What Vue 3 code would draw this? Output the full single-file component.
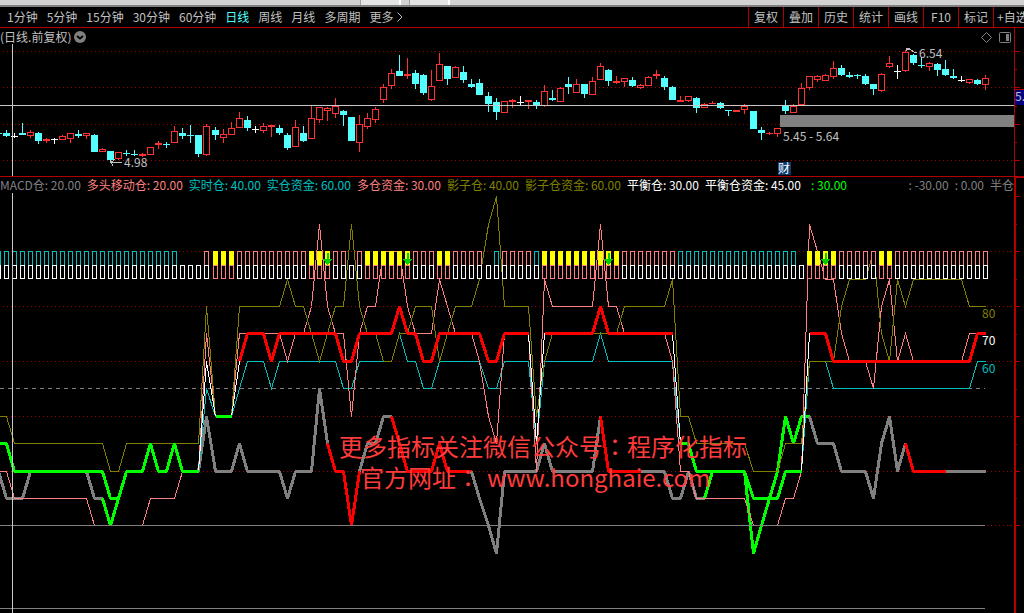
<template>
  <div class="terminal">
    <div class="window-edge">
      <span class="edge-tab" />
      <span class="edge-tab" />
    </div>

    <nav class="toolbar">
      <div class="periods">
        <button
          v-for="p in periods"
          :key="p"
          class="period"
          :class="{ active: p === activePeriod }"
          @click="activePeriod = p"
        >
          {{ p }}
        </button>
        <button class="period more">
          更多
          <svg class="more-icon" viewBox="0 0 6 10">
            <path d="M0.5 0.5 L5 5 L0.5 9.5" />
          </svg>
        </button>
      </div>
      <div class="tools">
        <button v-for="t in tools" :key="t" class="tool">{{ t }}</button>
      </div>
    </nav>

    <section class="panel price-panel">
      <svg class="chart" viewBox="0 28 1014 148">
        <line
          v-for="y in [51.5, 87.5, 124.5, 160.5]"
          :key="y"
          class="grid-line"
          x1="3"
          x2="1014"
          :y1="y"
          :y2="y"
        />
        <g v-for="c in candles" :key="c.i" :class="['candle', c.kind]">
          <path v-if="c.wick" :d="c.wick" />
          <rect
            v-if="c.height > 0"
            :x="c.x - 3"
            :y="c.top + 0.5"
            width="6"
            :height="c.height"
          />
          <path v-else :d="`M${c.x - 3.5} ${c.top + 0.5}h7`" />
        </g>
        <rect class="gap-zone" x="780" y="115" width="234" height="12" />
        <path class="cross" d="M0 105.5H1014M12.5 44V176" />
        <path class="pointer" d="M111 162.5H122M115 159L111 162.5L113 166" />
        <path class="pointer" d="M906 51V48.5H910M907 49L911 50L914 52H917" />
        <text class="mark" x="124" y="167">4.98</text>
        <text class="mark" x="919" y="58">6.54</text>
        <text class="mark" x="783" y="141">5.45 - 5.64</text>
        <rect class="news-box" x="778" y="162" width="13" height="13" />
        <text class="news" x="778" y="173">财</text>
        <path class="corner-icon" d="M986.5 32.5L991.5 37.5L986.5 42.5L981.5 37.5Z" />
        <rect
          class="corner-icon"
          x="999.5"
          y="32.5"
          width="11"
          height="10"
          rx="1"
        />
        <rect class="corner-fill" x="1006" y="34" width="3" height="7" />
      </svg>
      <svg class="axis" viewBox="1014 28 10 148">
        <path class="axis-line" d="M1014.5 28V176" />
        <path
          class="axis-line"
          d="M1015 51.5h5M1015 69.5h2M1015 87.5h5M1015 106.5h2M1015 124.5h5
             M1015 142.5h2M1015 160.5h5M1015 89.5h9"
        />
        <rect class="tag-box" x="1015" y="90" width="9" height="15" />
        <text class="mark" x="1015" y="101">5.</text>
      </svg>
      <button class="chart-title">
        <span>(日线.前复权)</span>
        <svg class="title-icon" viewBox="0 0 12 12">
          <circle cx="6" cy="6" r="6" />
          <path d="M3 5L6 7.5L9 5" />
        </svg>
      </button>
    </section>

    <header class="readout">
      <div class="readout-items">
        <span v-for="r in readings" :key="r[0]" :class="r[1]">{{ r[0] }}</span>
        <span class="lime signal">: 30.00</span>
        <span class="gray tail">: -30.00</span>
        <span class="gray">: 0.00</span>
        <span class="gray">半仓</span>
      </div>
    </header>

    <section class="panel">
      <svg class="chart" viewBox="0 193 1014 420">
        <line
          v-for="y in [251.5, 306.5, 361.5, 416.5, 471.5]"
          :key="y"
          class="grid-line"
          x1="3"
          x2="1014"
          :y1="y"
          :y2="y"
        />
        <path class="grid-line" d="M987 525.5H1014" />
        <path class="middle" d="M0 388.5H985" />
        <polyline
          v-for="s, idx in series"
          :key="idx"
          :class="['line', s.color, { thick: s.thick }]"
          :points="s.points"
        />
        <path class="base" d="M0 525.5H985M0 608.5H985" />
        <g v-for="b in bars" :key="b.x">
          <rect
            v-if="b.upper"
            :class="['bar', b.upper]"
            :x="b.x - 2"
            y="251.5"
            width="4"
            height="14"
          />
          <rect
            :class="['bar', b.lower]"
            :x="b.x - 2"
            y="265.5"
            width="4"
            height="13"
          />
        </g>
        <path
          v-for="i in [40, 50, 75, 102]"
          :key="i"
          class="arrow"
          :d="`M${xAt(i) - 1} 253h2v6h4l-5 6l-5 -6h4z`"
        />
        <path class="cross" d="M12.5 193V613" />
        <text class="value olive" x="982" y="318">80</text>
        <text class="value white" x="982" y="345">70</text>
        <text class="value teal" x="982" y="373">60</text>
        <text class="notice" x="339" y="456">
          更多指标关注微信公众号<tspan class="colon">：</tspan>程序化指标
        </text>
        <text class="notice" x="360" y="487">
          官方网址<tspan class="colon">：</tspan>
        </text>
        <text class="notice" x="487" y="487">www.honghaie.com</text>
      </svg>
      <svg class="axis" viewBox="1014 193 10 420">
        <path class="axis-line heavy" d="M1015 193V613" />
        <path
          class="axis-line"
          d="M1016 196.5h4M1016 251.5h4M1016 306.5h4M1016 361.5h4M1016 416.5h4
             M1016 471.5h4M1016 525.5h4M1016 224.5h1M1016 279.5h1M1016 334.5h1
             M1016 389.5h1M1016 444.5h1M1016 498.5h1"
        />
      </svg>
    </section>
  </div>
</template>

<script setup>
  import { ref } from 'vue';

  const periods = ['1分钟', '5分钟', '15分钟', '30分钟', '60分钟', '日线',
                   '周线', '月线', '多周期'];
  const tools = ['复权', '叠加', '历史', '统计', '画线', 'F10', '标记', '+自选'];
  const activePeriod = ref('日线');

  const readings = [
    ['MACD仓: 20.00', 'gray'],
    ['多头移动仓: 20.00', 'pink'],
    ['实时仓: 40.00', 'teal'],
    ['实仓资金: 60.00', 'teal'],
    ['多仓资金: 30.00', 'pink'],
    ['影子仓: 40.00', 'olive'],
    ['影子仓资金: 60.00', 'olive'],
    ['平衡仓: 30.00', 'white'],
    ['平衡仓资金: 45.00', 'white']
  ];

  // Center of the i-th day, on a pixel center so that 1px strokes stay sharp.
  // Days are 8px apart, the rest of the width is handed out at three places.
  function xAt(i) {
    const extra = [26, 60, 93].filter(start => i >= start).length;
    return 6.5 + i * 8 + extra;
  }

  function yAt(value) {
    return Math.round(525.4 - value * 2.743) + 0.5;
  }

  // kind (u - up, d - down, w - flat), high, body top, body bottom, low.
  // The first entry is the day that is cut off by the left edge.
  const days = `
    d 133 133 134 134|d 130 133 136 137|w 133 136 137 138|d 123 133 135 135
    u 130 132 136 138|d 132 133 141 144|u 138 139 141 143|w 138 139 140 144
    u 135 136 140 140|u 133 133 139 143|d 130 134 136 138|u 133 133 136 139
    d 134 135 152 152|u 148 149 152 152|d 151 151 160 162|u 152 152 159 160
    d 150 153 154 156|d 150 154 155 156|u 153 154 156 157|u 147 147 155 155
    u 141 143 145 149|d 142 144 145 148|u 126 131 143 143|d 128 133 136 139
    d 125 135 136 143|d 135 135 154 157|u 124 126 155 156|d 127 130 135 140
    u 129 134 138 143|u 122 128 135 135|u 112 118 128 128|d 116 120 128 131
    w 126 129 130 133|u 123 126 131 133|u 125 125 127 137|d 125 128 133 135
    d 133 135 148 150|u 120 127 147 147|d 126 133 141 142|u 106 118 139 139
    u 107 107 120 123|u 107 108 111 121|u 98 106 114 118|d 110 111 115 126
    d 117 117 141 141|u 115 124 143 152|u 113 118 127 129|u 107 109 120 123
    u 84 87 100 103|u 69 73 86 89|d 55 71 76 76|u 58 74 76 79
    d 70 73 84 89|d 74 75 93 95|u 70 86 100 101|u 53 64 81 81
    d 66 66 79 85|u 66 67 78 78|d 66 72 80 83|d 79 84 87 88
    d 79 83 95 95|d 92 96 104 112|d 98 102 112 120|u 101 101 113 113
    u 99 100 102 108|w 96 102 103 105|u 100 100 102 109|d 100 102 106 109
    u 85 91 106 107|d 90 98 100 101|u 87 88 102 102|d 77 84 87 94
    u 79 84 93 93|d 84 84 94 98|u 77 81 95 95|u 63 66 80 80
    d 69 70 81 86|u 76 81 83 84|u 78 78 82 87|d 77 80 86 87
    u 84 85 88 89|u 76 77 86 86|u 70 74 76 79|d 76 78 87 90
    d 86 87 100 100|u 96 100 102 102|u 96 96 101 102|d 97 98 108 113
    u 103 104 108 108|u 101 103 104 104|d 102 103 108 109|d 110 110 111 116
    u 110 110 112 112|u 104 106 110 114|d 111 111 129 129|d 127 130 133 140
    u 132 133 134 135|u 128 128 134 137|d 100 106 111 114|u 104 106 113 113
    u 83 88 105 105|u 76 76 88 90|u 75 76 80 82|u 74 75 81 81
    u 61 68 77 79|d 65 68 75 76|d 72 75 77 78|d 74 75 76 79
    d 74 76 84 85|d 84 84 89 95|u 73 74 91 92|u 56 63 67 68
    w 65 71 72 79|u 50 52 71 72|d 54 55 63 65|d 57 65 66 68
    u 62 63 67 71|d 63 64 70 76|d 60 69 75 76|d 69 76 78 79
    w 76 80 81 82|u 79 79 83 84|d 79 80 84 85|u 75 78 85 90
  `;

  const candles = days.trim().split(/[|\n]/).map((row, idx) => {
    const [kind, ...nums] = row.trim().split(' ');
    const [high, top, bottom, low] = nums.map(Number);
    const x = xAt(idx - 1);
    let wick = '';
    if (high < top) wick += `M${x} ${high}V${top}`;
    if (low > bottom) wick += `M${x} ${bottom}V${low}`;
    return { i: idx, kind, x, top, height: bottom - top - 1, wick };
  });

  // Flat list of day/value pairs
  function line(color, thick, pairs) {
    const points = [];
    for (let k = 0; k < pairs.length; k += 2)
      points.push(`${xAt(pairs[k])},${yAt(pairs[k + 1])}`);
    return { color, thick, points: points.join(' ') };
  }

  const series = [
    // MACD position
    line('gray', true, [-1, 20, 0, 10, 2, 10, 3, 20, 10, 20, 11, 10, 12, 10]),
    line('lime', true, [12, 10, 13, 0, 14, 10, 15, 20]),
    line('gray', true, [24, 20, 25, 40, 26, 20, 28, 20, 29, 30, 30, 20, 34, 20,
      35, 10, 36, 20, 38, 20, 39, 50, 40, 30]),
    line('red', true, [40, 30, 41, 20, 42, 20, 43, 0, 44, 20]),
    line('gray', true, [44, 20, 45, 30, 46, 30, 47, 40, 48, 40]),
    line('red', true, [48, 40, 49, 30, 50, 20, 53, 20, 54, 30, 55, 20, 58, 20]),
    line('gray', true, [58, 20, 59, 10, 60, 0, 61, -10, 62, 20, 66, 20, 67, 30,
      68, 20, 73, 20, 74, 40]),
    line('red', true, [74, 40, 75, 20, 79, 20]),
    line('gray', true, [79, 20, 82, 20, 83, 10, 84, 10, 85, 20, 86, 10,
      87, 10]),
    line('lime', true, [87, 10, 88, 20, 92, 20, 93, -10, 94, 0, 95, 10, 96, 20,
      97, 40, 98, 30, 99, 40, 100, 40]),
    line('gray', true, [100, 40, 101, 30, 103, 30, 104, 20, 107, 20, 108, 10,
      109, 30, 110, 40, 111, 20, 112, 30]),
    line('red', true, [112, 30, 113, 20, 117, 20]),
    line('gray', true, [117, 20, 122, 20]),

    // Real position
    line('teal', false, [24, 20, 25, 50, 26, 40, 28, 40, 29, 50, 30, 60, 32, 60,
      33, 50, 34, 60, 41, 60, 42, 50, 43, 50, 44, 60, 48, 60, 49, 70, 50, 60,
      51, 60, 52, 50, 53, 50, 54, 60, 59, 60, 60, 50, 61, 50, 62, 60, 65, 60,
      66, 30, 67, 60, 73, 60, 74, 70, 75, 60, 83, 60, 84, 30]),
    line('teal', false, [99, 20, 100, 60, 102, 60, 103, 50, 120, 50, 121, 60,
      122, 60]),

    // Long position
    line('pink', false, [-1, 20, 0, 20, 1, 10, 10, 10, 11, 0, 17, 0, 18, 10,
      21, 10, 22, 20, 24, 20, 25, 70, 26, 40, 28, 40, 29, 70, 34, 70, 35, 60,
      36, 70, 37, 70, 38, 80, 39, 110, 40, 80, 41, 70, 42, 70, 43, 40, 44, 70,
      45, 80, 46, 80, 47, 100, 49, 100, 50, 80, 51, 70, 53, 70, 54, 90, 55, 80,
      56, 70, 58, 70, 59, 60, 60, 40, 61, 30, 62, 70, 65, 70, 66, 20, 67, 90,
      68, 80, 73, 80, 74, 110, 75, 80, 76, 80, 77, 70, 82, 70, 83, 60, 84, 20,
      85, 20, 86, 10, 92, 10, 93, 0, 96, 0, 97, 10, 98, 10, 99, 20, 100, 110,
      101, 100, 102, 90, 103, 90, 104, 70, 105, 60, 107, 60, 108, 50, 109, 80,
      110, 90, 111, 60, 112, 70, 113, 60, 119, 60, 120, 70, 122, 70]),

    // Shadow position
    line('olive', false, [-1, 40, 0, 40, 1, 30, 12, 30, 13, 20, 14, 20, 15, 30,
      24, 30, 25, 80, 26, 40, 28, 40, 29, 80, 34, 80, 35, 90, 36, 80, 37, 80,
      38, 70, 39, 60, 40, 70, 41, 80, 42, 80, 43, 110, 44, 80, 45, 70, 46, 70,
      47, 60, 48, 60, 49, 70, 50, 70, 51, 80, 53, 80, 54, 60, 55, 70, 56, 80,
      58, 80, 59, 90, 60, 110, 61, 120, 62, 80, 65, 80, 66, 40, 67, 60, 68, 70,
      76, 70, 77, 80, 82, 80, 83, 90, 84, 40, 85, 40, 86, 30, 92, 30, 93, 20,
      96, 20, 97, 30, 99, 30, 100, 60, 103, 60, 104, 80, 105, 90, 107, 90,
      108, 100, 109, 70, 110, 60, 111, 90, 112, 80, 113, 90, 119, 90, 120, 80,
      122, 80]),

    // Balance position: green when low, red when high, white in between
    line('white', false, [24, 20, 25, 60, 26, 40]),
    line('white', false, [28, 40, 29, 60]),
    line('white', false, [65, 70, 66, 30, 67, 70]),
    line('white', false, [83, 70, 84, 30]),
    line('white', false, [99, 20, 100, 70]),
    line('lime', true, [-1, 30, 0, 30, 1, 20, 12, 20, 13, 10, 14, 10, 15, 20,
      17, 20, 18, 30, 19, 20, 20, 20, 21, 30, 22, 20, 24, 20]),
    line('lime', true, [26, 40, 28, 40]),
    line('lime', true, [84, 30, 85, 30, 86, 20, 92, 20, 93, 10, 96, 10, 97, 20,
      99, 20]),
    line('red', true, [29, 60, 30, 70, 32, 70, 33, 60, 34, 70, 41, 70, 42, 60,
      43, 60, 44, 70, 48, 70, 49, 80, 50, 70, 51, 70, 52, 60, 53, 60, 54, 70,
      59, 70, 60, 60, 61, 60, 62, 70, 65, 70]),
    line('red', true, [67, 70, 73, 70, 74, 80, 75, 70, 83, 70]),
    line('red', true, [100, 70, 102, 70, 103, 60, 120, 60, 121, 70, 122, 70])
  ];

  // Signal bars as runs: c - teal, p - pink, y - yellow, n - lower bar only
  const runs = [
    ['c', 23], ['n', 3], ['p', 1], ['y', 3], ['p', 9], ['y', 3], ['p', 2],
    ['n', 1], ['p', 1], ['y', 6], ['p', 3], ['y', 2], ['p', 4], ['n', 1],
    ['c', 1], ['p', 4], ['c', 1], ['y', 10], ['p', 7], ['c', 15], ['n', 1],
    ['y', 4], ['p', 5], ['y', 2], ['p', 12]
  ];
  const upperColors = { c: 'teal', p: 'pink', y: 'yellow', n: null };

  const bars = [];
  for (const [kind, count] of runs)
    for (let k = 0; k < count; ++k)
      bars.push({
        x: xAt(bars.length - 1),
        upper: upperColors[kind],
        lower: kind === 'y' ? 'pink' : 'white'
      });
</script>

<style>
body {
  background-color: #000;
}
</style>

<style scoped>
.terminal {
  --line-color: #b00000;

  min-height: 100vh;
  overflow: hidden;
  background-color: #000;
  color: #c0c0c0;
  font-family: "Noto Sans CJK SC", "Noto Sans", sans-serif;
  font-size: 12px;
  line-height: 16px;
}

button {
  padding: 0;
  border: 0;
  background-color: transparent;
  color: inherit;
  font: inherit;
  white-space: nowrap;
  cursor: pointer;
}

.window-edge {
  display: flex;
  gap: 8px;
  height: 5px;
  padding-left: 360px;
  background-color: #d2d2d2;
  border-bottom: 2px solid #808080;
}

.edge-tab {
  width: 38px;
  background-color: #e4e4e4;
  border-left: 1px solid #a0a0a0;
  border-right: 2px solid #fff;
}

.toolbar {
  display: flex;
  justify-content: space-between;
  height: 20px;
  border-bottom: 1px solid var(--line-color);
}

.periods {
  display: flex;
  gap: 9px;
  padding-left: 7px;
}

.period.active {
  color: #54ffff;
}

.more {
  display: flex;
  align-items: center;
  gap: 4px;
}

.more-icon {
  width: 6px;
  height: 10px;
  fill: none;
  stroke: #c0c0c0;
}

.tools {
  display: flex;
}

.tool {
  width: 35px;
  border-left: 1px solid var(--line-color);
}

.tool:last-child {
  width: 31px;
  padding-left: 3px;
  overflow: hidden;
  text-align: left;
}

.panel {
  position: relative;
  display: grid;
  grid-template-columns: 1fr 10px;
}

.price-panel {
  border-bottom: 1px solid var(--line-color);
}

.chart,
.axis {
  display: block;
  width: 100%;
  height: auto;
  shape-rendering: crispEdges;
}

.chart-title {
  position: absolute;
  top: 1px;
  left: 0;
  display: flex;
  align-items: center;
  gap: 3px;
}

.title-icon {
  width: 12px;
  height: 12px;
}

.title-icon circle {
  fill: #808080;
}

.title-icon path {
  fill: none;
  stroke: #000;
  stroke-width: 2;
}

.grid-line {
  stroke: #a00000;
  stroke-dasharray: 1 3;
}

.candle path {
  fill: none;
}

.candle.u {
  fill: #000;
  stroke: #ff3232;
}

.candle.d {
  fill: #54ffff;
  stroke: #54ffff;
}

.candle.w {
  stroke: #fff;
}

.gap-zone {
  fill: #808080;
}

.cross {
  fill: none;
  stroke: #c8c8c8;
}

.pointer {
  fill: none;
  stroke: #c0c0c0;
}

.mark {
  fill: #c0c0c0;
}

.news-box {
  fill: #0c3a70;
}

.news {
  fill: #fff;
}

.corner-icon {
  fill: none;
  stroke: #808080;
  shape-rendering: auto;
}

.corner-fill {
  fill: #808080;
}

.axis-line {
  fill: none;
  stroke: var(--line-color);
}

.axis-line.heavy {
  stroke-width: 2;
}

.tag-box {
  fill: #000080;
}

.readout {
  display: grid;
  grid-template-columns: 1fr 10px;
}

.readout::after {
  content: "";
  border-top: 1px solid var(--line-color);
  border-left: 2px solid var(--line-color);
}

.readout-items {
  display: flex;
  gap: 6px;
  min-width: 0;
  overflow: hidden;
  white-space: nowrap;
}

.signal {
  margin-left: 4px;
}

.tail {
  margin-left: auto;
}

.gray { --c: #808080; }
.pink { --c: #ff8080; }
.teal { --c: #00c0c0; }
.olive { --c: #808000; }
.white { --c: #fff; }
.lime { --c: #0f0; }
.red { --c: #f00; }
.yellow { --c: #ff0; }

.readout-items span {
  color: var(--c);
}

.line {
  fill: none;
  stroke: var(--c);
}

.line.thick {
  stroke-width: 3;
  stroke-linejoin: bevel;
}

.bar {
  fill: #000;
  stroke: var(--c);
}

.bar.yellow {
  fill: #ff0;
}

.arrow {
  fill: #00d000;
}

.middle {
  stroke: #808080;
  stroke-dasharray: 4 4;
}

.base {
  stroke: #808080;
}

.value {
  fill: var(--c);
}

.notice {
  fill: #ff3b3b;
  font-size: 24px;
}

/* The traditional face centers the full-width colon in its cell */
.colon {
  font-family: "Noto Sans CJK TC", sans-serif;
}
</style>
